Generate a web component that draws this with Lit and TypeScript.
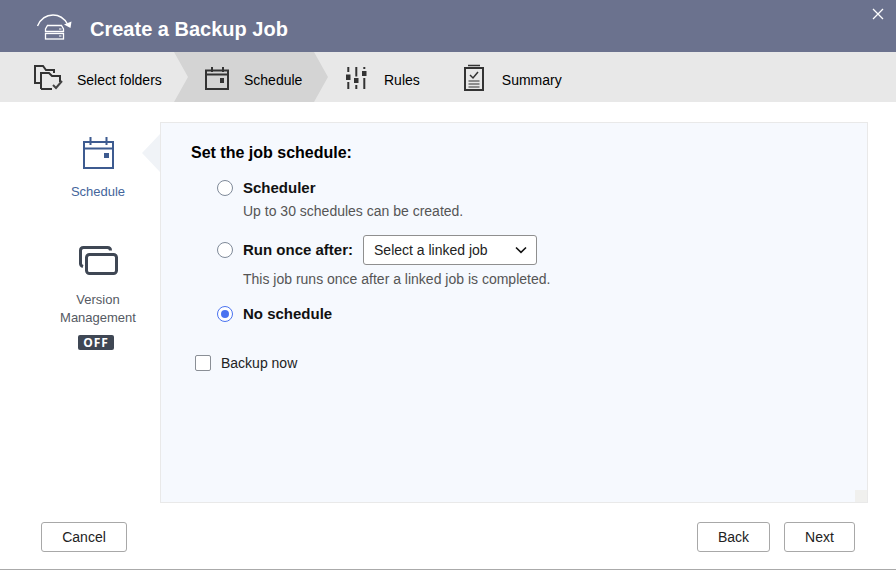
import { LitElement, html, css } from 'lit';
import { customElement } from 'lit/decorators.js';

@customElement('app-root')
export class AppRoot extends LitElement {
  static styles = css`
    :host {
      display: flex;
      flex-direction: column;
      width: 896px;
      height: 571px;
      overflow: hidden;
      background: #fff;
      font-family: 'Liberation Sans', Arial, sans-serif;
      font-size: 14px;
      color: #000;
    }
    svg { display: block; flex: none; }

    .header {
      position: relative;
      display: flex;
      align-items: center;
      height: 52px;
      flex: none;
      padding-left: 36px;
      box-sizing: border-box;
      background: #6b728e;
    }
    .header h1 {
      margin: 6px 0 0 17px;
      font-size: 20px;
      font-weight: 700;
      color: #fff;
    }
    .close { position: absolute; top: 8px; right: 12px; }

    .steps {
      display: flex;
      height: 50px;
      flex: none;
      background: #e8e8e8;
    }
    .step { display: flex; align-items: center; height: 50px; box-sizing: border-box; }
    .step span { padding-top: 5px; }
    .step.one { width: 174px; padding-left: 33px; gap: 13px; }
    .step.two {
      width: 154px;
      padding-left: 31px;
      gap: 15px;
      background: #d4d4d4;
      clip-path: polygon(0 0, 140px 0, 100% 50%, 140px 100%, 0 100%, 14px 50%);
    }
    .step.three { margin-left: 17px; gap: 17px; }
    .step.four { margin-left: 43px; gap: 17px; }

    .body {
      display: flex;
      height: 381px;
      margin-top: 20px;
      flex: none;
    }
    .side {
      display: flex;
      flex-direction: column;
      align-items: center;
      width: 160px;
      padding-left: 36px;
      box-sizing: border-box;
      font-size: 13px;
    }
    .side-item { display: flex; flex-direction: column; align-items: center; width: 124px; }
    .side-item.active { padding-top: 15px; color: #44659b; }
    .side-item.active .caption { margin-top: 15px; }
    .side-item.version { padding-top: 47px; color: #555a63; }
    .side-item.version .caption { margin-top: 16px; text-align: center; line-height: 18px; }
    .badge {
      margin: 8px 4px 0 0;
      height: 15px;
      width: 36px;
      border-radius: 2px;
      background: #3f4754;
      color: #fff;
      font-family: 'Open Sans', sans-serif;
      font-size: 12px;
      font-weight: 700;
      line-height: 15px;
      letter-spacing: 1px;
      text-align: center;
    }

    .panel {
      position: relative;
      width: 708px;
      box-sizing: border-box;
      padding: 21px 30px 20px;
      background: #f6f9fe;
      border: 1px solid #e9e9e9;
    }
    .pointer {
      position: absolute;
      left: -19px;
      top: 11px;
      width: 18px;
      height: 38px;
      background: #f0f3f7;
      clip-path: polygon(100% 0, 0 50%, 100% 100%);
    }
    .grip {
      position: absolute;
      right: 0;
      bottom: 0;
      width: 12px;
      height: 12px;
      background: #f0f0ee;
    }
    .panel h2 { margin: 0; font-size: 16px; font-weight: 700; line-height: 18px; }

    .options { display: flex; flex-direction: column; margin: 18px 0 0 26px; }
    .option { display: flex; align-items: center; gap: 10px; font-size: 15px; line-height: 16px; font-weight: 700; color: #111; }
    .radio {
      width: 16px;
      height: 16px;
      box-sizing: border-box;
      flex: none;
      border-radius: 50%;
      border: 1.5px solid #7f8a99;
      background: #fff;
    }
    .radio.on { border-color: #4a73f0; display: flex; align-items: center; justify-content: center; }
    .radio.on::after { content: ''; width: 8px; height: 8px; border-radius: 50%; background: #4a73f0; }
    .hint { margin: 7px 0 0 26px; line-height: 16px; color: #555; }
    .hint.after-select { margin-top: 6px; }
    .option.second { margin-top: 16px; }
    .option.third { margin-top: 19px; }

    .select {
      display: flex;
      align-items: center;
      justify-content: space-between;
      width: 174px;
      height: 30px;
      box-sizing: border-box;
      padding: 0 9px 0 10px;
      border: 1px solid #8f8f8f;
      border-radius: 3px;
      background: #fff;
      font-size: 14px;
      font-weight: 400;
      color: #222;
    }

    .check {
      display: flex;
      align-items: center;
      gap: 10px;
      margin: 33px 0 0 4px;
      color: #222;
    }
    .box {
      width: 16px;
      height: 16px;
      box-sizing: border-box;
      border: 1.5px solid #8a8f96;
      border-radius: 2px;
      background: #fff;
    }

    .footer {
      display: flex;
      align-items: flex-start;
      justify-content: space-between;
      flex: 1;
      padding: 19px 41px 0;
      border-bottom: 1px solid #aaa;
      margin-bottom: 1px;
    }
    .footer div { display: flex; gap: 14px; }
    button {
      height: 30px;
      box-sizing: border-box;
      padding: 0;
      border: 1px solid #a8a8a8;
      border-radius: 3px;
      background: #fff;
      font: 14px 'Liberation Sans', Arial, sans-serif;
      color: #222;
    }
    .cancel { width: 86px; }
    .back { width: 73px; }
    .next { width: 71px; }
  `;

  render() {
    return html`
      <div class="header">
        <svg width="37" height="32" viewBox="0 0 37 32" fill="none" stroke="#fff">
          <path d="M1.500 16C5 8 11 5 17 5C23 5 28 8 31.500 14" stroke-width="1.400" />
          <path d="M28 14.500L34.500 18L35.500 11.500Z" fill="#fff" stroke="none" />
          <path d="M9.500 21.500V19L11.500 15.500H25.500L27.500 19V21.500Z" stroke-width="1.300" />
          <rect x="9.500" y="23.500" width="18" height="5.500" stroke-width="1.300" />
          <path d="M23 19H25.500M23 26H25.500" stroke-width="1" />
        </svg>
        <h1>Create a Backup Job</h1>
        <svg class="close" width="12" height="12" viewBox="0 0 12 12" stroke="#fff" stroke-width="1.300">
          <path d="M1 1L11 11M11 1L1 11" />
        </svg>
      </div>

      <div class="steps">
        <div class="step one">
          <svg width="31" height="26" viewBox="0 0 31 26" fill="none" stroke="#333" stroke-width="2">
            <path d="M7 19H2V2H10L13 6H21V9" />
            <path d="M8 25V9H16L19 12H27V18M8 25H19" />
            <path d="M20 21L23 24L29 17" stroke="#444" />
          </svg>
          <span>Select folders</span>
        </div>
        <div class="step two">
          <svg width="24" height="26" viewBox="0 0 24 26" fill="none" stroke="#333" stroke-width="2">
            <path d="M1 6.500H23V25H1ZM1 10.500H23M7 3V8M18 3V8" />
            <rect x="15" y="14" width="4" height="5" fill="#333" stroke="none" />
          </svg>
          <span>Schedule</span>
        </div>
        <div class="step three">
          <svg width="22" height="24" viewBox="0 0 22 24" fill="#333">
            <path d="M2.300 2h2v5h-2zM1 9.500h4.500v5.500H1zM2.300 17h2v7h-2z" />
            <path d="M10.300 2h2v9.500h-2zM9 13h4.500v5H9zM10.300 20h2v4h-2z" />
            <path d="M18.300 2h2v2h-2zM17 6h4.500v5H17zM18.300 13h2v11h-2z" />
          </svg>
          <span>Rules</span>
        </div>
        <div class="step four">
          <svg width="22" height="28" viewBox="0 0 22 28" fill="none" stroke="#333">
            <path d="M5 2.500H17" stroke-width="1.500" />
            <path d="M2 5H20V27H2Z" stroke-width="2" />
            <path d="M7 12L10 15L15 9" stroke-width="1.500" />
            <path d="M5.500 18H16.500M5.500 21H16.500M5.500 24H16.500" stroke-width="1" />
          </svg>
          <span>Summary</span>
        </div>
      </div>

      <div class="body">
        <div class="side">
          <div class="side-item active">
            <svg width="32" height="32" viewBox="0 0 32 32" fill="none" stroke="#3d5b90" stroke-width="2">
              <path d="M2 5H31V31H2ZM2 11.500H31M8.500 0V8M24.500 0V8" />
              <rect x="22" y="16" width="5" height="5" fill="#3d5b90" stroke="none" />
            </svg>
            <div class="caption">Schedule</div>
          </div>
          <div class="side-item version">
            <svg width="39" height="29" viewBox="0 0 39 29" fill="none" stroke="#3f4754" stroke-width="3">
              <path d="M4 20.500C2.500 20 1.500 19 1.500 17.500V4.500C1.500 2.500 2.500 1.500 4.500 1.500H28.500C30.500 1.500 31.500 2.500 31.500 4.500" />
              <rect x="7.500" y="8.500" width="30" height="19" rx="3" />
            </svg>
            <div class="caption">Version<br />Management</div>
            <div class="badge">OFF</div>
          </div>
        </div>

        <div class="panel">
          <div class="pointer"></div>
          <h2>Set the job schedule:</h2>
          <div class="options">
            <label class="option"><span class="radio"></span>Scheduler</label>
            <div class="hint">Up to 30 schedules can be created.</div>
            <label class="option second">
              <span class="radio"></span>Run once after:
              <span class="select">
                Select a linked job
                <svg width="12" height="8" viewBox="0 0 12 8" fill="none" stroke="#111" stroke-width="1.600">
                  <path d="M1 1.500L6 6.300L11 1.500" />
                </svg>
              </span>
            </label>
            <div class="hint after-select">This job runs once after a linked job is completed.</div>
            <label class="option third"><span class="radio on"></span>No schedule</label>
          </div>
          <label class="check"><span class="box"></span>Backup now</label>
          <div class="grip"></div>
        </div>
      </div>

      <div class="footer">
        <button class="cancel">Cancel</button>
        <div>
          <button class="back">Back</button>
          <button class="next">Next</button>
        </div>
      </div>
    `;
  }
}
